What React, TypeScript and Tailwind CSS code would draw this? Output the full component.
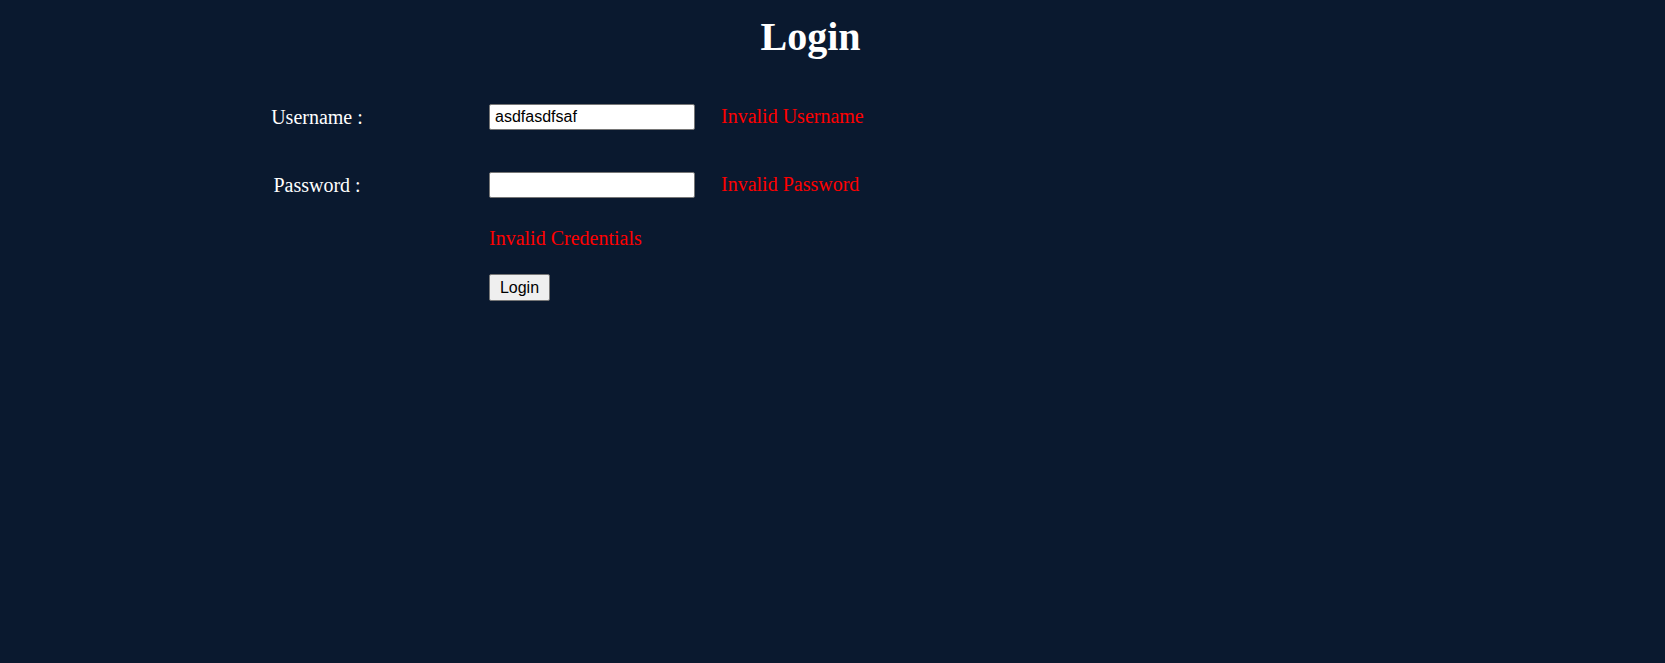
import React, { useState } from 'react';

export default function App() {
  const [username, setUsername] = useState('asdfasdfsaf');
  const [password, setPassword] = useState('');

  return (
    <div className="min-h-screen bg-[#0a192f] font-['Liberation_Serif',serif] text-white">
      <h1 className="w-[1621px] pt-[14px] text-center text-[40px] font-bold leading-[46px]">Login</h1>

      <div className="mt-[44px] flex flex-col">
        {/* Username row */}
        <div className="flex h-[26px] items-center">
          <label className="ml-[217px] w-[200px] text-center text-[20px] leading-[23px]">Username :</label>
          <input
            type="text"
            value={username}
            onChange={e => setUsername(e.target.value)}
            className="ml-[72px] h-[26px] w-[206px] rounded-[2px] border border-[#767676] bg-white pl-[5px] font-['Liberation_Sans',sans-serif] text-[16px] text-black outline-none"
          />
          <span className="-mt-[1px] ml-[26px] text-[20px] leading-[23px] text-[#ff0000]">Invalid Username</span>
        </div>

        {/* Password row */}
        <div className="mt-[42px] flex h-[26px] items-center">
          <label className="ml-[217px] w-[200px] text-center text-[20px] leading-[23px]">Password :</label>
          <input
            type="password"
            value={password}
            onChange={e => setPassword(e.target.value)}
            className="ml-[72px] h-[26px] w-[206px] rounded-[2px] border border-[#767676] bg-white pl-[5px] font-['Liberation_Sans',sans-serif] text-[16px] text-black outline-none"
          />
          <span className="-mt-[1px] ml-[26px] text-[20px] leading-[23px] text-[#ff0000]">Invalid Password</span>
        </div>

        <div className="ml-[489px] mt-[29px] text-[20px] leading-[23px] text-[#ff0000]">Invalid Credentials</div>

        <div className="ml-[489px] mt-[24px]">
          <button className="h-[27px] w-[61px] rounded-[2px] border border-[#767676] bg-[#efefef] font-['Liberation_Sans',sans-serif] text-[16px] text-black">
            Login
          </button>
        </div>
      </div>
    </div>
  );
}
